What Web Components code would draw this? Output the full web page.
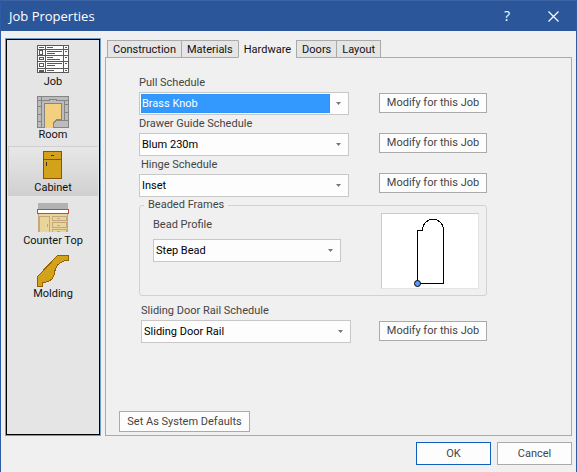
<!DOCTYPE html>
<html lang="en">
<head>
<meta charset="utf-8">
<title>Job Properties</title>
<style>
  body { margin: 0; font: 11px/16px Roboto, "Liberation Sans", sans-serif; color: #444; }
</style>
</head>
<body>
<job-dialog></job-dialog>

<template id="icon-job"><svg viewBox="0 0 32 32" shape-rendering="crispEdges"><rect x=".5" y="2.5" width="31" height="27" fill="#fff" stroke="#5a5a5a"/><path fill="none" stroke="#5a5a5a" d="M0 6.5H32M0 12.5H32M0 18.5H32M0 25.5H32M8.5 2V30M26.5 2V30M2 4.5H7M10 4.5H16M28 4.5H30M10 8.5H25M10 10.5H18M28 8.5H30M10 14.5H16M10 16.5H23M28 14.5H30M10 20.5H25M10 22.5H18M28 20.5H30M10 27.5H17M28 27.5H30M2.5 7.5H5.5V11.5H2.5ZM2.5 14.5H6.5V16.5H2.5ZM2.5 20.5H6.5V23.5H2.5ZM2.5 27.5H6.5V28.5H2.5Z"/></svg></template>
<template id="icon-room"><svg viewBox="0 0 32 32" shape-rendering="crispEdges"><rect x=".5" y=".5" width="31" height="31" fill="#bcbcbc" stroke="#858585"/><path fill="none" stroke="#858585" d="M4.5 0V32M0 4.5H12M20 4.5H32M27.5 4V25M0 10.5H4M0 18.5H4M0 25.5H4M27 8.5H32M27 16.5H32M12.5 5V3.5H19.5V5"/><path fill="#f2d080" stroke="#858585" d="M7.5 32V7.5H24.5V23.5H20L16.500 27V32"/><path fill="#bcbcbc" stroke="#858585" d="M31.500 24.500H20L16.500 27V31.500H31.500Z"/></svg></template>
<template id="icon-cabinet"><svg viewBox="0 0 32 32" shape-rendering="crispEdges"><rect x="6.500" y="2.500" width="18" height="27" fill="#d2a31a" stroke="#8c5300"/><path fill="none" stroke="#8c5300" d="M6 10.500H25"/><path stroke="#333" d="M14 6.500H17M9.500 13V17"/></svg></template>
<template id="icon-counter"><svg viewBox="0 0 32 32" shape-rendering="crispEdges"><path fill="#b2b2b2" d="M1 1H31V7H1Z"/><path fill="#e8d59c" d="M1 12H31V30H1Z"/><rect x=".5" y="7.500" width="31" height="4" fill="#fff" stroke="#c64836"/><path fill="none" stroke="#c6a777" d="M1.500 12V30M30.500 12V30M2.500 30V14.500H12.500V30M15.500 14.500H29.500V18.500H15.500ZM15.500 20.500H29.500V25.500H15.500ZM15.500 30V27.500H29.500V30"/><path stroke="#aaa" d="M10.500 22V25M20 16.500H23M20 23.500H23M20 29.500H23"/></svg></template>
<template id="icon-molding"><svg viewBox="0 0 32 32" shape-rendering="crispEdges"><path fill="#d2a31a" stroke="#946000" d="M.5 31.500V21.500L20.500 .5H31.500V5.500H28L26 6.500L24 7.500L21 9.500L19.500 12L18 15.500L17 20.500L15 24L12 26L7 27.500L5.500 28V31.500Z"/></svg></template>

<script>
const define = (name, html, setup) => customElements.define(name, class extends HTMLElement {
  connectedCallback() {
    if (this.shadowRoot) return;
    const root = this.attachShadow({ mode: "open" });
    root.innerHTML = `<style>*{box-sizing:border-box}:host{display:block}button,select{font:inherit;color:inherit;margin:0}</style>` + html;
    if (setup) setup.call(this, root);
  }
});

define("title-bar", `
<style>
  :host { background: #2b579a; color: #fff; border-top: 1px solid #3c64a4; }
  header { display: flex; align-items: center; height: 30px; padding-left: 8px; }
  h1 { flex: 1; margin: 0; font: 13px/20px "Open Sans", "Noto Sans", sans-serif; }
  button { width: 46px; height: 30px; padding: 0; border: 0; background: none; color: #fff; font: 14px/20px "Open Sans", sans-serif; }
  svg { display: block; width: 11px; height: 11px; margin: auto; }
</style>
<header><h1><slot></slot></h1><button type="button" aria-label="Help">?</button><button type="button" aria-label="Close"><svg viewBox="0 0 11 11" fill="none" stroke="#fff" stroke-width="1.200"><path d="M.5 .5L10.500 10.500M10.500 .5L.5 10.500"/></svg></button></header>`);

define("nav-item", `
<style>
  button { display: flex; flex-direction: column; align-items: center; width: 100%; height: 50px; padding: 3px 0 0; border: 0; background: none; color: #111; line-height: 14px; }
  :host([selected]) button { background: linear-gradient(#e8e8e8, #d0d0d0); box-shadow: inset 1px 1px #d0d0d0; }
  svg { display: block; width: 32px; height: 32px; }
</style>
<button type="button"><slot></slot></button>`, function (root) {
  const icon = document.getElementById("icon-" + this.getAttribute("icon"));
  root.querySelector("button").prepend(icon.content.cloneNode(true));
});

define("side-nav", `
<style>
  :host { background: #e5e5e5; border: 1px solid #6f9cc4; }
  nav { display: flex; flex-direction: column; gap: 3px; height: 100%; border: 1px solid #000; padding: 0 1px; }
</style>
<nav><slot></slot></nav>`);

define("tab-item", `
<style>
  button { display: block; height: 18px; padding: 0 5px; border: 1px solid #aaa; background: #e5e5e5; color: #111; line-height: 15px; }
  :host { margin-right: -1px; }
  :host([selected]) button { background: #f0f0f0; border-top-color: #f0f0f0; border-bottom-color: #f0f0f0; line-height: 18px; }
</style>
<button type="button" role="tab"><slot></slot></button>`, function (root) {
  root.querySelector("button").setAttribute("aria-selected", this.hasAttribute("selected"));
});

define("push-button", `
<style>
  button { display: block; width: 100%; height: var(--button-height, 20px); padding: 0; border: 1px solid #aaa; background: #fdfdfd; white-space: nowrap; line-height: 18px; }
  :host([primary]) button { border-color: #0f5fc0; }
</style>
<button type="button"><slot></slot></button>`);

define("select-field", `
<style>
  label { display: block; height: var(--label-height, 18px); padding-left: var(--label-indent, 0); line-height: 18px; }
  .box { display: grid; align-items: center; height: 23px; border: 1px solid #c8c8c8; background: #fdfdfd; color: #000; }
  .box > * { grid-area: 1 / 1; }
  select { position: relative; appearance: none; width: 100%; height: 21px; padding: 0 18px 0 2px; border: 0; outline: 0; background: none; }
  svg { justify-self: end; width: 5px; height: 3px; margin-right: 7px; }
  .mark { display: none; height: 19px; margin: 0 18px 0 1px; background: #3399ff; border: 1px dotted #d06a10; }
  :host([active]) .mark { display: block; }
  :host([active]) select { color: #fff; }
</style>
<label for="s"><slot></slot></label>
<div class="box"><span class="mark"></span><svg viewBox="0 0 5 3" fill="#777"><path d="M0 0H5L2.500 3Z"/></svg><select id="s"></select></div>`, function (root) {
  root.querySelector("select").add(new Option(this.getAttribute("value")));
});

define("profile-preview", `
<style>
  :host { width: 98px; background: #fff; border: 1px solid #ccc; border-right-color: #e4e4e4; border-bottom-color: #e4e4e4; }
  svg { display: block; width: 96px; height: 74px; }
</style>
<svg viewBox="0 0 96 74" role="img" aria-label="Step bead outline"><path shape-rendering="crispEdges" fill="none" stroke="#000" d="M40.500 16.500H35.500V69.500H61.500V16.500C61.500 1.500 40.500 1.500 40.500 16.500"/><circle cx="35.500" cy="69.500" r="3" fill="#5b9bff" stroke="#000"/></svg>`);

define("group-box", `
<style>
  fieldset { min-width: 0; margin: 0; padding: 0 7px 6px 13px; border: 1px solid #d2d2d2; border-radius: 3px; }
  legend { margin-left: -9px; padding: 0 4px; line-height: 16px; }
  div { display: flex; align-items: flex-start; justify-content: space-between; gap: 40px; }
</style>
<fieldset><legend></legend><div><slot></slot></div></fieldset>`, function (root) {
  root.querySelector("legend").textContent = this.getAttribute("caption");
});

define("hardware-page", `
<style>
  :host { flex: 1; display: flex; flex-direction: column; min-height: 0; border: 1px solid #aaa; padding-bottom: 3px; }
  .form { padding: 16px 84px 0 33px; }
  .row { display: grid; grid-template-columns: minmax(0, 1fr) 108px; gap: 30px; }
  .mods { display: flex; flex-direction: column; gap: 20px; padding-top: 19px; }
  .rail { margin-top: 6px; padding-left: 2px; gap: 28px; }
  .indent { --label-indent: 2px; }
  .bead { flex: 1; max-width: 188px; margin-top: 3px; --label-height: 23px; }
  .defaults { align-self: flex-start; width: 131px; margin: auto 0 0 13px; --button-height: 21px; }
</style>
<div class="form">
  <div class="row">
    <div>
      <select-field value="Brass Knob" active>Pull Schedule</select-field>
      <select-field value="Blum 230m">Drawer Guide Schedule</select-field>
      <select-field class="indent" value="Inset">Hinge Schedule</select-field>
    </div>
    <div class="mods">
      <push-button>Modify for this Job</push-button>
      <push-button>Modify for this Job</push-button>
      <push-button>Modify for this Job</push-button>
    </div>
  </div>
  <group-box caption="Beaded Frames">
    <select-field class="bead" value="Step Bead">Bead Profile</select-field>
    <profile-preview></profile-preview>
  </group-box>
  <div class="row rail">
    <select-field value="Sliding Door Rail">Sliding Door Rail Schedule</select-field>
    <div class="mods"><push-button>Modify for this Job</push-button></div>
  </div>
</div>
<push-button class="defaults">Set As System Defaults</push-button>`);

define("job-dialog", `
<style>
  :host { display: flex; flex-direction: column; min-height: 100vh; background: #f0f0f0; border: 1px solid #2f5ba2; border-top: 0; }
  main { flex: 1; display: flex; gap: 4px; padding: 7px 4px 0; }
  side-nav { flex: 0 0 96px; }
  .content { flex: 1; display: flex; flex-direction: column; min-width: 0; padding-top: 2px; }
  .tabs { display: flex; padding-left: 2px; margin-bottom: -1px; z-index: 1; }
  footer { display: flex; justify-content: flex-end; gap: 6px; padding: 6px 4px 7px; --button-height: 23px; }
  footer push-button { width: 75px; }
</style>
<title-bar>Job Properties</title-bar>
<main>
  <side-nav>
    <nav-item icon="job">Job</nav-item>
    <nav-item icon="room">Room</nav-item>
    <nav-item icon="cabinet" selected>Cabinet</nav-item>
    <nav-item icon="counter">Counter Top</nav-item>
    <nav-item icon="molding">Molding</nav-item>
  </side-nav>
  <div class="content">
    <div class="tabs" role="tablist">
      <tab-item>Construction</tab-item><tab-item>Materials</tab-item><tab-item selected>Hardware</tab-item><tab-item>Doors</tab-item><tab-item>Layout</tab-item>
    </div>
    <hardware-page></hardware-page>
  </div>
</main>
<footer><push-button primary>OK</push-button><push-button>Cancel</push-button></footer>`);
</script>
</body>
</html>
